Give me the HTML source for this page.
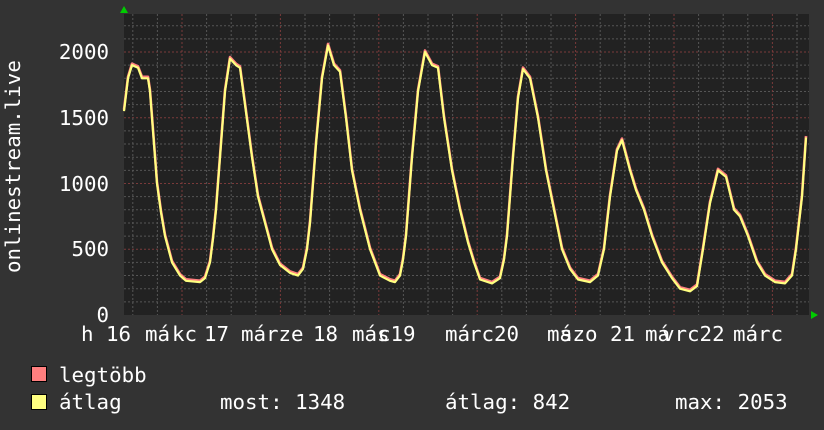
<!DOCTYPE html>
<html><head><meta charset="utf-8"><style>
body{margin:0;background:#333;width:824px;height:430px;overflow:hidden}
svg{display:block}
text{font-family:"DejaVu Sans Mono","Liberation Mono",monospace;font-size:20.8px;fill:#fff}
</style></head><body>
<svg id="s" width="824" height="430" xmlns="http://www.w3.org/2000/svg">
<rect x="0" y="0" width="824" height="430" fill="#333"/>
<rect x="124" y="14" width="685" height="301" fill="#222"/>
<g id="grid"></g>
<path id="mx" fill="none" stroke="#ff7f7f" stroke-width="2.6" stroke-linejoin="round" transform="translate(0,-1.5)"/>
<path id="av" fill="none" stroke="#ffff80" stroke-width="2.2" stroke-linejoin="round"/>
<polygon points="120,13 128,13 124,6" fill="#0c0"/>
<polygon points="811,311 811,319 818,315" fill="#0c0"/>
<g text-anchor="end">
<text x="109" y="59">2000</text><text x="109" y="125">1500</text><text x="109" y="191">1000</text><text x="109" y="256">500</text><text x="109" y="322">0</text>
</g>
<text transform="translate(20,273) rotate(-90)">onlinestream.live</text>
<text x="81" y="341">h 16</text><text x="145" y="341">má</text><text x="172" y="341">kc</text>
<text x="204" y="341">17</text><text x="241" y="341">má</text><text x="266" y="341">rze</text>
<text x="313" y="341">18</text><text x="352" y="341">más</text><text x="378" y="341">c19</text>
<text x="445" y="341">má</text><text x="469" y="341">rc20</text>
<text x="547" y="341">má</text><text x="560" y="341">szo</text><text x="610" y="341">21</text>
<text x="645" y="341">má</text><text x="662" y="341">vrc22</text><text x="733" y="341">márc</text>
<rect x="31.5" y="366.5" width="15" height="15" fill="#ff7f7f" stroke="#000"/>
<rect x="31.5" y="394.5" width="15" height="15" fill="#ffff80" stroke="#000"/>
<text x="59" y="382">legtöbb</text>
<text x="59" y="409">átlag</text>
<text x="220" y="409">most: 1348</text>
<text x="445" y="409">átlag: 842</text>
<text x="675" y="409">max: 2053</text>
</svg>
<script>
var g=document.getElementById('grid'),h='';
for(var v=100;v<=2200;v+=100){var y=315-v*0.1315;var maj=v%500==0;
h+='<line x1="124" x2="809" y1="'+y+'" y2="'+y+'" stroke="'+(maj?'#7a3a3a':'#555')+'" stroke-dasharray="2,2"/>';}
for(var x=182-24.6*2;x<809;x+=24.6){if(x<125)continue;var k=Math.round((x-182)/24.6);var maj=k%4==0;
h+='<line y1="14" y2="315" x1="'+x+'" x2="'+x+'" stroke="'+(maj?'#7a3a3a':'#555')+'" stroke-dasharray="2,2"/>';}
g.innerHTML=h;
var p=[124,1550,128,1800,132,1900,138,1880,142,1800,148,1800,150,1700,152,1500,155,1200,157,1000,161,780,165,600,172,400,180,300,186,260,200,250,205,280,210,400,213,580,216,800,220,1200,225,1700,230,1950,236,1900,240,1880,245,1600,252,1200,258,900,265,700,272,500,280,380,290,320,298,300,303,350,307,500,310,700,316,1300,322,1800,328,2050,334,1900,340,1850,346,1500,352,1100,360,800,370,500,380,300,390,260,395,250,400,300,403,420,406,600,412,1200,418,1700,425,2000,432,1900,438,1880,444,1500,452,1100,460,800,468,550,474,400,480,270,492,240,500,280,504,420,507,600,513,1200,518,1650,523,1870,530,1800,538,1500,546,1100,554,800,562,500,570,350,578,270,590,250,598,300,604,500,610,900,617,1250,622,1330,630,1100,636,950,644,800,652,600,662,400,672,280,680,200,690,180,697,220,703,500,710,850,718,1100,726,1050,734,800,740,750,748,600,757,400,765,300,775,250,785,240,792,300,796,500,802,900,806,1350];
var d='';for(var i=0;i<p.length;i+=2){d+=(i?'L':'M')+p[i]+','+(315-p[i+1]*0.1315);}
document.getElementById('mx').setAttribute('d',d);
document.getElementById('av').setAttribute('d',d);
</script>
</body></html>
